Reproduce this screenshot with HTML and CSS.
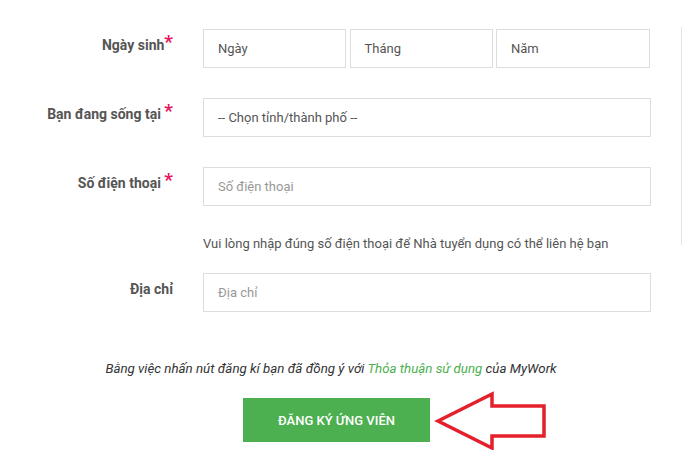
FILE: index.html
```html
<!DOCTYPE html>
<html lang="vi">
<head>
<meta charset="utf-8">
<link rel="stylesheet" href="styles.css">
</head>
<body>
<div class="page">
  <form class="form">
    <div class="row">
      <label class="label">Ngày sinh<span class="req">*</span></label>
      <div class="field date-grid">
        <div class="input">Ngày</div>
        <div class="input">Tháng</div>
        <div class="input">Năm</div>
      </div>
    </div>
    <div class="row">
      <label class="label">Bạn đang sống tại <span class="req">*</span></label>
      <div class="field">
        <div class="input">-- Chọn tỉnh/thành phố --</div>
      </div>
    </div>
    <div class="row row-help">
      <label class="label">Số điện thoại <span class="req">*</span></label>
      <div class="field">
        <div class="input placeholder">Số điện thoại</div>
        <p class="help">Vui lòng nhập đúng số điện thoại để Nhà tuyển dụng có thể liên hệ bạn</p>
      </div>
    </div>
    <div class="row">
      <label class="label">Địa chỉ</label>
      <div class="field">
        <div class="input placeholder">Địa chỉ</div>
      </div>
    </div>
    <div class="footer">
      <p class="terms">Bằng việc nhấn nút đăng kí bạn đã đồng ý với <a class="link">Thỏa thuận sử dụng</a> của MyWork</p>
      <div class="btn-wrap">
        <button type="button" class="btn">ĐĂNG KÝ ỨNG VIÊN</button>
        <svg class="arrow" width="116" height="62" viewBox="0 0 116 62">
          <polygon points="4,30 58,3 58,15 110,15 110,45 58,45 58,57" fill="#fff" stroke="#e4202b" stroke-width="3.5" stroke-linejoin="miter"/>
        </svg>
      </div>
    </div>
  </form>
  <aside class="side"></aside>
</div>
</body>
</html>
```
FILE: styles.css
```css
* { box-sizing: border-box; }
html, body { margin: 0; padding: 0; background: #fff; }
body {
  font-family: Roboto, "Noto Sans", "Liberation Sans", sans-serif;
  color: #555;
  width: 682px;
  height: 450px;
  overflow: hidden;
}
.page {
  display: flex;
  align-items: flex-start;
}
.form {
  width: 681px;
  padding-top: 29px;
}
.side {
  width: 1px;
  height: 218px;
  margin-top: 27px;
  border-left: 1px solid #e3e3e3;
}
.row {
  display: flex;
  align-items: flex-start;
  margin-bottom: 30px;
}
.row-help { margin-bottom: 20px; }
.label {
  width: 173px;
  text-align: right;
  font-weight: 700;
  font-size: 14px;
  color: #555;
  padding-top: 8px;
  line-height: 16px;
  white-space: nowrap;
}
.req {
  color: #e8175d;
  font-size: 19px;
  font-weight: 700;
  vertical-align: top;
  line-height: 12px;
  position: relative;
  top: -1px;
}
.field {
  margin-left: 30px;
  width: 448px;
}
.date-grid {
  display: grid;
  grid-template-columns: 143px 143px 1fr;
  column-gap: 3.5px;
  width: 447px;
}
.input {
  height: 39px;
  border: 1px solid #ddd;
  font-size: 13px;
  line-height: 37px;
  padding-left: 14px;
  color: #555;
  white-space: nowrap;
  overflow: hidden;
}
.placeholder { color: #999; }
.help {
  margin: 29px 0 0;
  font-size: 13px;
  line-height: 18px;
  color: #555;
}
.footer {
  width: 673px;
  text-align: center;
  padding-top: 18px;
}
.terms {
  margin: 0;
  padding-right: 11px;
  font-size: 13.3px;
  line-height: 18px;
  font-style: italic;
  color: #333;
}
.link { color: #4caf50; text-decoration: none; }
.btn-wrap {
  position: relative;
  width: 187px;
  margin: 20px auto 0;
}
.btn {
  display: block;
  width: 187px;
  height: 44px;
  border: 0;
  border-radius: 0;
  background: #4caf50;
  color: #fff;
  font-family: Roboto, "Noto Sans", sans-serif;
  font-size: 13px;
  font-weight: 500;
  padding: 0;
}
.arrow {
  position: absolute;
  left: 191px;
  top: -7px;
}
```
